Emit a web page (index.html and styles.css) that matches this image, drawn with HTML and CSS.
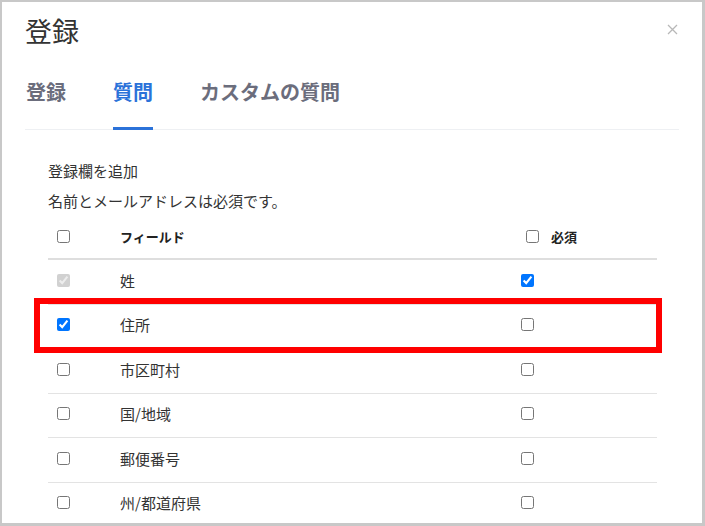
FILE: index.html
```html
<!DOCTYPE html>
<html lang="ja">
<head>
    <meta charset="UTF-8">
    <title>登録</title>
    <link rel="stylesheet" href="styles.css">
</head>
<body>

    <div class="modal">
        <div class="modal-header">
            <h2 class="modal-title">登録</h2>
            <svg class="close" width="11" height="11" viewBox="0 0 11 11">
                <path d="M1 1L10 10M10 1L1 10" stroke="#b8b8b8" stroke-width="1.3" fill="none"/>
            </svg>
        </div>

        <div class="tabs">
            <div class="tab">登録</div>
            <div class="tab active">質問</div>
            <div class="tab">カスタムの質問</div>
        </div>

        <div class="modal-body">
            <p class="text">登録欄を追加</p>
            <p class="text">名前とメールアドレスは必須です。</p>

            <div class="field-table">
                <div class="field-row head">
                    <div class="col-check"><input type="checkbox"></div>
                    <div class="col-name">フィールド</div>
                    <div class="col-req"><input type="checkbox"><span>必須</span></div>
                </div>
                <div class="field-row">
                    <div class="col-check"><input type="checkbox" checked disabled></div>
                    <div class="col-name">姓</div>
                    <div class="col-req"><input type="checkbox" checked></div>
                </div>
                <div class="field-row highlight">
                    <div class="col-check"><input type="checkbox" checked></div>
                    <div class="col-name">住所</div>
                    <div class="col-req"><input type="checkbox"></div>
                </div>
                <div class="field-row">
                    <div class="col-check"><input type="checkbox"></div>
                    <div class="col-name">市区町村</div>
                    <div class="col-req"><input type="checkbox"></div>
                </div>
                <div class="field-row">
                    <div class="col-check"><input type="checkbox"></div>
                    <div class="col-name">国/地域</div>
                    <div class="col-req"><input type="checkbox"></div>
                </div>
                <div class="field-row">
                    <div class="col-check"><input type="checkbox"></div>
                    <div class="col-name">郵便番号</div>
                    <div class="col-req"><input type="checkbox"></div>
                </div>
                <div class="field-row">
                    <div class="col-check"><input type="checkbox"></div>
                    <div class="col-name">州/都道府県</div>
                    <div class="col-req"><input type="checkbox"></div>
                </div>
            </div>
        </div>
    </div>

</body>
</html>
```

FILE: styles.css
```css
* {
    margin: 0;
    padding: 0;
    box-sizing: border-box;
}

body {
    font-family: "Noto Sans CJK JP", "Noto Sans", sans-serif;
    color: #333;
    background: #fff;
    width: 705px;
    height: 526px;
    overflow: hidden;
}

.modal {
    width: 705px;
    height: 526px;
    border: 2px solid #c8c8c8;
    border-right-width: 3px;
    border-bottom-width: 3px;
    padding: 0 23px;
    overflow: hidden;
}

.modal-header {
    height: 58px;
    display: flex;
    justify-content: space-between;
}

.modal-title {
    font-size: 27px;
    font-weight: normal;
    line-height: 58px;
    color: #333;
}

.close {
    margin-top: 22px;
    margin-right: 1px;
}

.tabs {
    display: flex;
    gap: 47px;
    border-bottom: 1px solid #eef0f3;
    padding-left: 1px;
}

.tab {
    font-size: 20px;
    font-weight: bold;
    line-height: 28px;
    padding: 18px 0 21px;
    color: #6b6d7c;
    border-bottom: 3px solid transparent;
    margin-bottom: -1px;
}

.tab.active {
    color: #2b72d9;
    border-bottom-color: #2b72d9;
}

.modal-body {
    padding: 26px 22px 0 23px;
}

.text {
    font-size: 15px;
    line-height: 30px;
}

.field-row {
    display: grid;
    grid-template-columns: 62px 401px 1fr;
    align-items: center;
    height: 44.5px;
    padding-bottom: 3px;
    border-bottom: 1px solid #e3e3e3;
    font-size: 15px;
    position: relative;
}

.field-row.head {
    height: 44px;
    padding-bottom: 1px;
    border-bottom: 2px solid #dedede;
    font-size: 13px;
    font-weight: bold;
    color: #222;
}

.col-check {
    padding-left: 9px;
    display: flex;
}

.col-name {
    padding-left: 10px;
}

.col-req {
    padding-left: 10px;
    display: flex;
    align-items: center;
}

.head .col-req {
    padding-left: 15px;
}

.head .col-req span {
    margin-left: 12px;
}

input[type="checkbox"] {
    margin: 0;
    width: 13px;
    height: 13px;
}

.highlight::after {
    content: "";
    position: absolute;
    top: -7px;
    bottom: -5px;
    left: -14px;
    right: -5px;
    border: 6px solid #ff0000;
    pointer-events: none;
}
```
